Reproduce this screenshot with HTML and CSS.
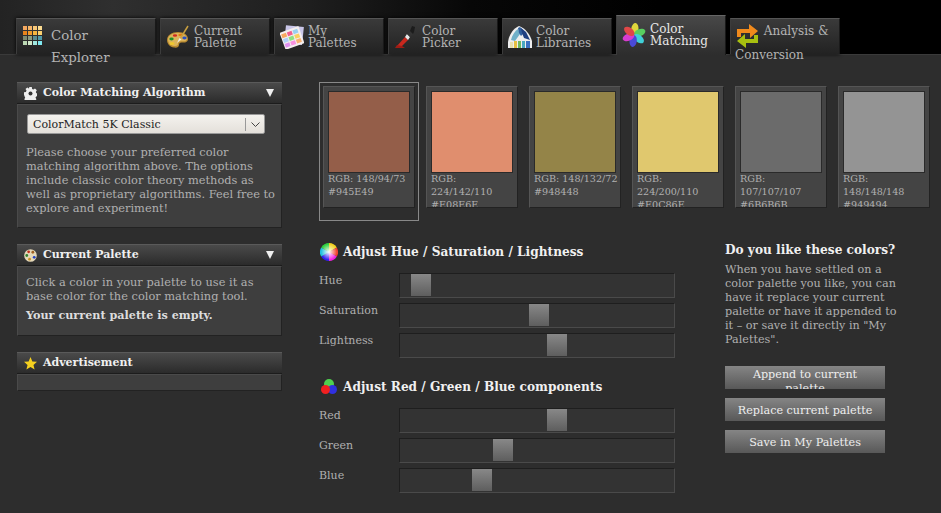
FILE: index.html
```html
<!DOCTYPE html>
<html>
<head>
    <title>Color Matching</title>
    <link rel="stylesheet" href="styles.css">
</head>
<body>
    <div class="header">
        <div class="tab tab-wide">
            <svg class="tab-icon grid-icon" width="19" height="19" viewBox="0 0 19 19">
                <rect x="0" y="0" width="4" height="4" fill="#f4a860"/><rect x="5" y="0" width="4" height="4" fill="#f6b568"/><rect x="10" y="0" width="4" height="4" fill="#f8c878"/><rect x="15" y="0" width="4" height="4" fill="#fbdb90"/>
                <rect x="0" y="5" width="4" height="4" fill="#e8841c"/><rect x="5" y="5" width="4" height="4" fill="#f09a2c"/><rect x="10" y="5" width="4" height="4" fill="#f5b440"/><rect x="15" y="5" width="4" height="4" fill="#fad070"/>
                <rect x="0" y="10" width="4" height="4" fill="#7d8a70"/><rect x="5" y="10" width="4" height="4" fill="#8a9a80"/><rect x="10" y="10" width="4" height="4" fill="#5a8a90"/><rect x="15" y="10" width="4" height="4" fill="#4f98a8"/>
                <rect x="0" y="15" width="4" height="4" fill="#bcd8b4"/><rect x="5" y="15" width="4" height="4" fill="#d0e8c8"/><rect x="10" y="15" width="4" height="4" fill="#a0e8e0"/><rect x="15" y="15" width="4" height="4" fill="#80e8f0"/>
            </svg>
            Color Explorer
        </div>
        <div class="tab">
            <svg class="tab-icon" width="24" height="24" viewBox="0 0 24 24">
                <path d="M1 15C1 10 6 7 12 7c6 0 10 3 10 7 0 3-3 4-6 3.500-2-.3-3 1-3 2.500 0 2-2 3-5 2.500C4 22 1 19 1 15z" fill="#b98a30"/>
                <path d="M2 14.500C2 10.500 6.500 8 12 8c5 0 9 2.500 9 5.500 0 2.500-2.500 3-5 2.700-2.500-.3-4 1-4 2.800 0 1.500-1.500 2.300-4 1.900C4.500 20.500 2 18 2 14.500z" fill="#dcb45a"/>
                <ellipse cx="5.500" cy="14" rx="2.200" ry="1.400" fill="#1f8f2a"/>
                <ellipse cx="9" cy="10.500" rx="2.200" ry="1.300" fill="#d02a20"/>
                <ellipse cx="14.500" cy="10" rx="2.200" ry="1.300" fill="#e07a10"/>
                <ellipse cx="18.500" cy="13" rx="2.200" ry="1.400" fill="#2a50c0"/>
                <ellipse cx="6" cy="18.500" rx="2.600" ry="1.500" fill="#f0c830"/>
                <path d="M14 14L22 1" stroke="#c9a040" stroke-width="1.500"/>
                <path d="M11 18l2.500-5 2 1.200z" fill="#eee"/>
            </svg>
            <span class="tab-label">Current Palette</span>
        </div>
        <div class="tab">
            <svg class="tab-icon" width="24" height="24" viewBox="0 0 24 24">
                <rect x="5" y="1" width="18" height="18" fill="#c9c6e8" transform="rotate(6 13 10)"/>
                <rect x="2" y="4" width="20" height="18" fill="#f4eeee" transform="rotate(-20 12 13)"/>
                <g transform="rotate(-20 12 13)">
                    <rect x="3" y="6" width="5" height="4" fill="#f8a860"/><rect x="9" y="6" width="5" height="4" fill="#f06090"/><rect x="15" y="6" width="5" height="4" fill="#9ad0f0"/>
                    <rect x="3" y="11" width="5" height="4" fill="#b0d0f8"/><rect x="9" y="11" width="5" height="4" fill="#90e080"/><rect x="15" y="11" width="5" height="4" fill="#f8d060"/>
                    <rect x="3" y="16" width="5" height="4" fill="#e090f0"/><rect x="9" y="16" width="5" height="4" fill="#f890e0"/><rect x="15" y="16" width="5" height="4" fill="#f8b070"/>
                </g>
            </svg>
            <span class="tab-label">My Palettes</span>
        </div>
        <div class="tab">
            <svg class="tab-icon" width="24" height="24" viewBox="0 0 24 24">
                <path d="M3 21L11 12l3 3-6 6z" fill="#c8281e"/>
                <path d="M1 23l2-3 5 1 3 2z" fill="#a01c14"/>
                <path d="M11 12l2-3 3 3-2 3z" fill="#e8e8e8"/>
                <path d="M13 9l3-3 3 3-3 3z" fill="#333"/>
                <path d="M16 6l2-5 3 1-1 5-1 2z" fill="#1c1c1c"/>
            </svg>
            <span class="tab-label">Color Picker</span>
        </div>
        <div class="tab">
            <svg class="tab-icon" width="24" height="24" viewBox="0 0 24 24">
                <path d="M0 23V17C1 9 6 3 11 1c6 2 11 8 13 15v7z" fill="#eee"/>
                <path d="M3 15C4 10 7 6 10 4l2 5-5 7z" fill="#6fb0c8"/>
                <path d="M10 3l2-1 5 5-4 4-2-3z" fill="#2f5f9e"/>
                <path d="M13 3l5 4 4 8-6-2-2-5z" fill="#1f3f80"/>
                <rect x="2" y="17" width="3" height="6" fill="#e8e0b0"/><rect x="6" y="16" width="3" height="7" fill="#e8c040"/><rect x="10" y="16" width="3" height="7" fill="#70b860"/><rect x="14" y="16" width="3" height="7" fill="#48a8c0"/><rect x="18" y="16" width="4" height="7" fill="#3a70c0"/>
            </svg>
            <span class="tab-label">Color Libraries</span>
        </div>
        <div class="tab tab-active">
            <svg class="tab-icon" width="24" height="24" viewBox="0 0 24 24">
                <ellipse cx="12" cy="6" rx="3.600" ry="6" fill="#e0d83c" transform="rotate(8 12 12)"/>
                <ellipse cx="12" cy="6" rx="3.600" ry="6" fill="#58d060" transform="rotate(68 12 12)"/>
                <ellipse cx="12" cy="6" rx="3.600" ry="6" fill="#40d0d8" transform="rotate(128 12 12)"/>
                <ellipse cx="12" cy="6" rx="3.600" ry="6" fill="#4a4ad8" transform="rotate(188 12 12)"/>
                <ellipse cx="12" cy="6" rx="3.600" ry="6" fill="#d83cd0" transform="rotate(248 12 12)"/>
                <ellipse cx="12" cy="6" rx="3.600" ry="6" fill="#e04848" transform="rotate(308 12 12)"/>
            </svg>
            <span class="tab-label">Color Matching</span>
        </div>
        <div class="tab tab-inline">
            <svg class="inline-icon" width="23" height="24" viewBox="0 0 23 24">
                <path d="M1 13V5h12V0l9 7-8 7V9H5v4z" fill="#f08a1c"/>
                <path d="M22 11v8H10v5l-9-7 8-7v5h9v-4z" fill="#a8c010"/>
            </svg>
            Analysis &amp; Conversion
        </div>
    </div>

    <div class="page">
        <div class="sidebar">
            <div class="panel">
                <div class="panel-head">
                    <svg class="panel-icon" width="13" height="13" viewBox="0 0 13 13">
                        <path d="M5.200 0h2.600l.3 1.900 1.300.6 1.600-1 1.800 1.800-1 1.600.6 1.300 1.600.3v2.600l-1.900.3-.6 1.300 1 1.600-1.800 1.800-1.600-1-1.300.6-.3 1.900H5.200l-.3-1.900-1.300-.6-1.600 1-1.800-1.800 1-1.600-.6-1.300L0 7.800V5.200l1.900-.3.6-1.300-1-1.600L3.300.6l1.600 1 .3-.6z" fill="#eee"/>
                        <circle cx="6.500" cy="6.500" r="2" fill="#333"/>
                    </svg>
                    <span class="panel-title">Color Matching Algorithm</span>
                    <span class="arrow"></span>
                </div>
                <div class="panel-body">
                    <div class="select">
                        <span class="select-text">ColorMatch 5K Classic</span>
                        <span class="select-btn">
                            <svg width="9" height="5" viewBox="0 0 9 5"><path d="M.5.5l4 4 4-4" fill="none" stroke="#444"/></svg>
                        </span>
                    </div>
                    <p>Please choose your preferred color matching algorithm above. The options include classic color theory methods as well as proprietary algorithms. Feel free to explore and experiment!</p>
                </div>
            </div>

            <div class="panel">
                <div class="panel-head">
                    <svg class="panel-icon" width="13" height="13" viewBox="0 0 14 14">
                        <circle cx="7" cy="7" r="6.800" fill="#e4d8b8"/>
                        <circle cx="5" cy="3" r="1.500" fill="#c03020"/><circle cx="9.500" cy="3.500" r="1.500" fill="#a06020"/>
                        <circle cx="3" cy="7" r="1.500" fill="#308030"/><circle cx="11" cy="9" r="1.500" fill="#2040c0"/>
                        <circle cx="6" cy="11" r="1.500" fill="#c89020"/>
                    </svg>
                    <span class="panel-title">Current Palette</span>
                    <span class="arrow"></span>
                </div>
                <div class="panel-body panel-body-palette">
                    <p>Click a color in your palette to use it as base color for the color matching tool.</p>
                    <p class="empty-note">Your current palette is empty.</p>
                </div>
            </div>

            <div class="panel">
                <div class="panel-head">
                    <svg class="panel-icon" width="13" height="13" viewBox="0 0 14 14">
                        <path d="M7 0l2 4.800 5 .4-3.800 3.300 1.200 5L7 10.800 2.600 13.500l1.200-5L0 5.200l5-.4z" fill="#f5d020"/>
                    </svg>
                    <span class="panel-title">Advertisement</span>
                </div>
                <div class="panel-body panel-body-ad"></div>
            </div>
        </div>

        <div class="main">
            <div class="swatches">
                <div class="swatch-wrap swatch-selected">
                    <div class="swatch">
                        <div class="swatch-color" style="background-color: #945E49"></div>
                        <div class="swatch-text">RGB: 148/94/73<br>#945E49</div>
                    </div>
                </div>
                <div class="swatch-wrap">
                    <div class="swatch">
                        <div class="swatch-color" style="background-color: #E08E6E"></div>
                        <div class="swatch-text">RGB: 224/142/110<br>#E08E6E</div>
                    </div>
                </div>
                <div class="swatch-wrap">
                    <div class="swatch">
                        <div class="swatch-color" style="background-color: #948448"></div>
                        <div class="swatch-text">RGB: 148/132/72<br>#948448</div>
                    </div>
                </div>
                <div class="swatch-wrap">
                    <div class="swatch">
                        <div class="swatch-color" style="background-color: #E0C86E"></div>
                        <div class="swatch-text">RGB: 224/200/110<br>#E0C86E</div>
                    </div>
                </div>
                <div class="swatch-wrap">
                    <div class="swatch">
                        <div class="swatch-color" style="background-color: #6B6B6B"></div>
                        <div class="swatch-text">RGB: 107/107/107<br>#6B6B6B</div>
                    </div>
                </div>
                <div class="swatch-wrap">
                    <div class="swatch">
                        <div class="swatch-color" style="background-color: #949494"></div>
                        <div class="swatch-text">RGB: 148/148/148<br>#949494</div>
                    </div>
                </div>
            </div>

            <div class="lower">
                <div class="sliders">
                    <h2>
                        <svg class="heading-icon" width="18" height="18" viewBox="0 0 18 18">
                            <defs>
                                <radialGradient id="wheel-white"><stop offset="0" stop-color="#fff"/><stop offset="1" stop-color="#fff" stop-opacity="0"/></radialGradient>
                            </defs>
                            <path d="M9 9V0a9 9 0 0 1 7.800 4.500z" fill="#f0d020"/>
                            <path d="M9 9l7.800-4.500a9 9 0 0 1 0 9z" fill="#f04030"/>
                            <path d="M9 9l7.800 4.500A9 9 0 0 1 9 18z" fill="#f020e0"/>
                            <path d="M9 9v9a9 9 0 0 1-7.800-4.500z" fill="#3020f0"/>
                            <path d="M9 9l-7.800 4.500a9 9 0 0 1 0-9z" fill="#20c0e0"/>
                            <path d="M9 9L1.200 4.500A9 9 0 0 1 9 0z" fill="#30d040"/>
                            <circle cx="9" cy="9" r="8" fill="url(#wheel-white)"/>
                        </svg>
                        Adjust Hue / Saturation / Lightness
                    </h2>
                    <div class="slider-row">
                        <span class="slider-label">Hue</span>
                        <div class="track"><div class="thumb" style="left: 11px"></div></div>
                    </div>
                    <div class="slider-row">
                        <span class="slider-label">Saturation</span>
                        <div class="track"><div class="thumb" style="left: 129px"></div></div>
                    </div>
                    <div class="slider-row">
                        <span class="slider-label">Lightness</span>
                        <div class="track"><div class="thumb" style="left: 147px"></div></div>
                    </div>

                    <h2 class="heading-rgb">
                        <svg class="heading-icon" width="18" height="18" viewBox="0 0 18 18">
                            <circle cx="9" cy="6" r="5" fill="#4fd04f"/>
                            <circle cx="12.500" cy="11.500" r="4.500" fill="#3030e0"/>
                            <circle cx="5.500" cy="11.500" r="4.500" fill="#f02020"/>
                        </svg>
                        Adjust Red / Green / Blue components
                    </h2>
                    <div class="slider-row">
                        <span class="slider-label">Red</span>
                        <div class="track"><div class="thumb" style="left: 147px"></div></div>
                    </div>
                    <div class="slider-row">
                        <span class="slider-label">Green</span>
                        <div class="track"><div class="thumb" style="left: 93px"></div></div>
                    </div>
                    <div class="slider-row">
                        <span class="slider-label">Blue</span>
                        <div class="track"><div class="thumb" style="left: 72px"></div></div>
                    </div>
                </div>

                <div class="actions">
                    <h3>Do you like these colors?</h3>
                    <p>When you have settled on a color palette you like, you can have it replace your current palette or have it appended to it – or save it directly in "My Palettes".</p>
                    <div class="button button-long">Append to current palette</div>
                    <div class="button">Replace current palette</div>
                    <div class="button">Save in My Palettes</div>
                </div>
            </div>
        </div>
    </div>
</body>
</html>
```

FILE: styles.css
```css
html, body {
    height: 100%;
}

body {
    margin: 0;
    overflow: hidden;
    background-color: #2d2d2d;
    color: #b0b0b0;
    font-family: "DejaVu Serif", serif;
    font-size: 11px;
    line-height: 14px;
}

/* tabs */
.header {
    display: flex;
    align-items: flex-end;
    gap: 4px;
    height: 55px;
    padding-left: 16px;
    box-sizing: border-box;
    background: linear-gradient(to right, #232323 0, #2f2f2f 12%, #1e1e1e 33%, #070707 50%, #000 70%);
    border-bottom: 1px solid #3a3a3a;
}

.tab {
    position: relative;
    width: 110px;
    height: 36px;
    box-sizing: border-box;
    padding: 6px 4px 0 5px;
    background: linear-gradient(to bottom, #3a3a3a, #222);
    border-top: 1px solid #555;
    border-left: 1px solid #3c3c3c;
    border-right: 1px solid #1a1a1a;
    box-shadow: 0 0 4px #000;
    color: #b4b4b4;
    font-size: 12px;
    line-height: 12px;
}

.tab-wide {
    width: 140px;
    padding: 6px 30px 0 6px;
    font-size: 13.3px;
    line-height: 22px;
}

.tab-icon {
    float: left;
    margin-right: 4px;
}

.grid-icon {
    margin: 1px 9px 20px 0;
}

.tab-label {
    display: block;
}

.tab-active {
    height: 40px;
    margin-bottom: -1px;
    padding-top: 7px;
    background: linear-gradient(to bottom, #484848, #2d2d2d);
    border-top-color: #666;
    box-shadow: none;
    color: #e8e8e8;
}

.tab-inline {
    padding: 5px 0 0 4px;
    line-height: 14px;
}

.inline-icon {
    vertical-align: -13px;
    margin: 0 1px 0 1px;
}

/* page */
.page {
    display: flex;
    padding: 27px 0 0 17px;
}

.sidebar {
    width: 265px;
    flex-shrink: 0;
}

.panel {
    margin-bottom: 16px;
}

.panel-head {
    display: flex;
    align-items: center;
    height: 20px;
    padding: 0 8px 0 7px;
    background: linear-gradient(to bottom, #4a4a4a, #2b2b2b);
    border-top: 1px solid #5a5a5a;
    border-bottom: 1px solid #1c1c1c;
    color: #f0f0f0;
    font-weight: bold;
    font-size: 11px;
}

.panel-icon {
    margin-right: 6px;
}

.panel-title {
    flex: 1;
}

.arrow {
    width: 0;
    height: 0;
    border-left: 4px solid transparent;
    border-right: 4px solid transparent;
    border-top: 8px solid #f0f0f0;
}

.panel-body {
    padding: 9px 3px 12px 8px;
    background-color: #3e3e3e;
    border-top: 1px solid #4a4a4a;
    border-left: 1px solid #4a4a4a;
    border-right: 1px solid #222;
    border-bottom: 1px solid #222;
    font-size: 11.4px;
}

.panel-body p {
    margin: 0;
}

.panel-body-palette {
    padding-top: 8px;
    padding-bottom: 0;
    height: 60px;
}

.panel-body-ad {
    padding: 0;
    height: 15px;
}

.panel-body .empty-note {
    margin-top: 5px;
    color: #ddd;
    font-size: 11.2px;
    font-weight: bold;
}

.select {
    display: flex;
    align-items: center;
    width: 236px;
    height: 18px;
    margin: 0 0 11px 1px;
    background: linear-gradient(to bottom, #f4f2ee, #e4e0da);
    border: 1px solid #999;
    border-radius: 2px;
    color: #222;
    font-size: 11px;
}

.select-text {
    flex: 1;
    padding: 1px 0 0 5px;
}

.select-btn {
    display: flex;
    align-items: center;
    justify-content: center;
    width: 18px;
    height: 13px;
    border-left: 1px solid #999;
}

.main {
    margin-left: 37px;
    flex: 1;
}

/* swatches */
.swatches {
    display: flex;
    gap: 3px;
}

.swatch-wrap {
    width: 100px;
    height: 139px;
    box-sizing: border-box;
    padding: 3px;
    border: 1px solid transparent;
}

.swatch-selected {
    border-color: #888;
}

.swatch {
    height: 122px;
    box-sizing: border-box;
    padding: 4px 0 0 4px;
    overflow: hidden;
    background-color: #444;
    border-top: 1px solid #555;
    border-left: 1px solid #555;
    border-right: 1px solid #222;
    border-bottom: 1px solid #222;
}

.swatch-color {
    width: 80px;
    height: 80px;
    border: 1px solid #2a2a2a;
}

.swatch-text {
    margin-top: -1px;
    font-size: 9.6px;
    line-height: 13px;
}

/* sliders */
.lower {
    display: flex;
    margin-top: 21px;
}

.sliders {
    width: 356px;
}

h2 {
    display: flex;
    align-items: center;
    gap: 5px;
    height: 20px;
    margin: 0 0 11px 1px;
    color: #f0f0f0;
    font-size: 12.15px;
    font-weight: bold;
}

.heading-rgb {
    margin-top: 19px;
}

.slider-row {
    display: flex;
    margin-bottom: 5px;
}

.slider-label {
    width: 80px;
    padding-top: 1px;
    font-size: 11px;
}

.track {
    position: relative;
    width: 276px;
    height: 25px;
    box-sizing: border-box;
    background-color: #333;
    border-top: 1px solid #1e1e1e;
    border-left: 1px solid #1e1e1e;
    border-right: 1px solid #4a4a4a;
    border-bottom: 1px solid #4a4a4a;
}

.thumb {
    position: absolute;
    top: 0;
    width: 20px;
    height: 22px;
    background: linear-gradient(to bottom, #888, #5e5e5e);
}

/* right column */
.actions {
    width: 178px;
    margin-left: 50px;
}

h3 {
    margin: 0 0 5px;
    color: #f0f0f0;
    font-size: 12.15px;
    font-weight: bold;
    line-height: 16px;
}

.actions p {
    margin: 0 0 19px;
    font-size: 11.2px;
    line-height: 14px;
}

.button {
    width: 160px;
    height: 23px;
    margin-bottom: 9px;
    overflow: hidden;
    box-sizing: border-box;
    padding: 5px 10px 0;
    background: linear-gradient(to bottom, #858585, #585858);
    color: #eee;
    text-align: center;
    font-size: 11.2px;
    line-height: 15px;
}

.button-long {
    padding-top: 2px;
    line-height: 14px;
}
```
